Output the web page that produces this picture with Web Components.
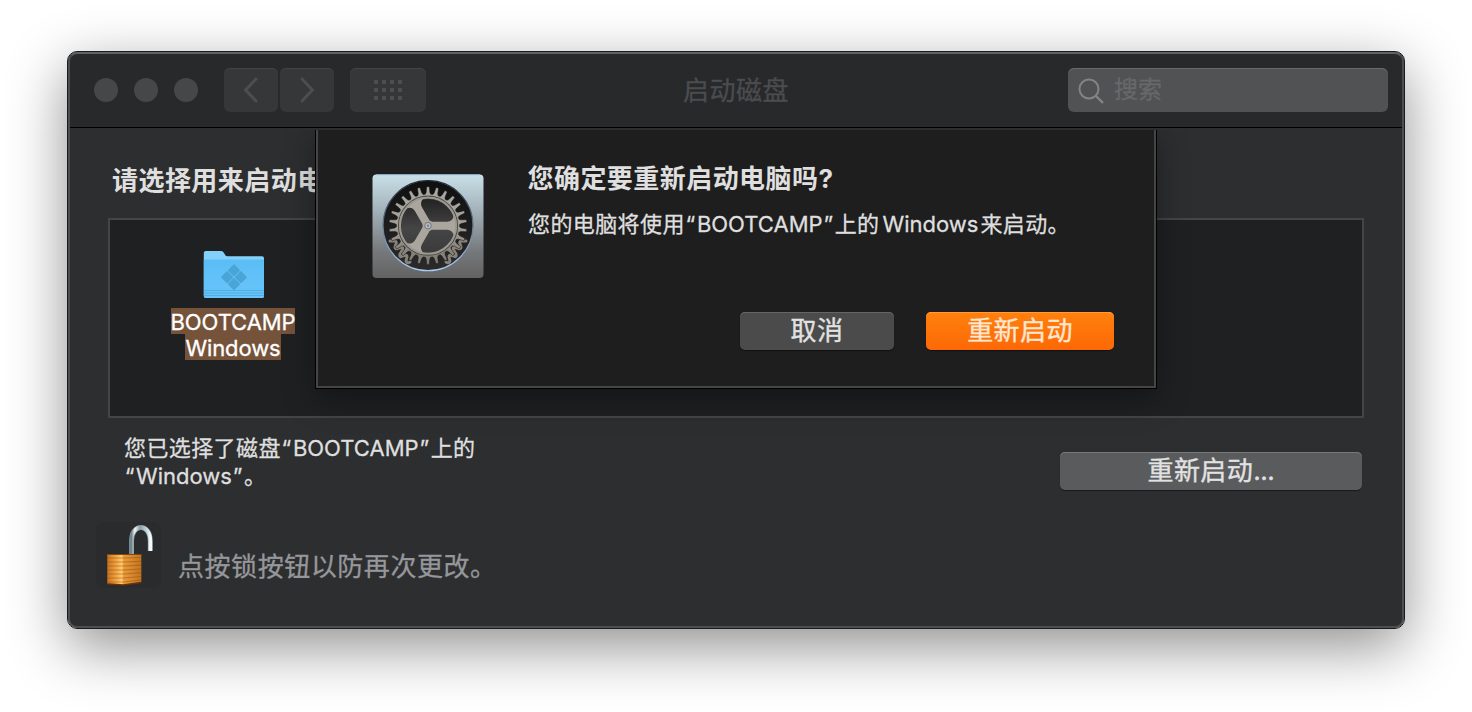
<!DOCTYPE html>
<html lang="zh-CN">
<head>
<meta charset="utf-8">
<title>启动磁盘</title>
<style>
html,body{margin:0;height:100%}
body{background:#fff;overflow:hidden;box-sizing:border-box;padding:51px 67px 0;font-family:Inter,"Noto Sans CJK SC",sans-serif;color:#dfdfdf}
</style>
</head>
<body>
<startup-window></startup-window>
<script>
const define = (name, html) => customElements.define(name, class extends HTMLElement {
  constructor() {
    super();
    this.attachShadow({mode: 'open'}).innerHTML = html;
    if (this.shadowRoot.querySelector('.teeth')) drawGear(this.shadowRoot);
  }
});

function drawGear(root) {
  const n = 26, cx = 56, cy = 51.7;
  let d = '';
  for (let i = 0; i < n; i++) {
    const a = i * 2 * Math.PI / n - Math.PI / 2;
    [[31.6, -.085], [33.4, -.055], [39, -.034], [39, .034], [33.4, .055], [31.6, .085]].forEach(([r, o]) => {
      d += (d ? 'L' : 'M') + (cx + r * Math.cos(a + o)).toFixed(2) + ' ' + (cy + r * Math.sin(a + o)).toFixed(2);
    });
  }
  root.querySelector('.teeth').setAttribute('d', d + 'Z');
}

define('mac-button', `<style>
:host{box-sizing:border-box;display:flex;align-items:center;justify-content:center;height:38px;border-radius:5px;background:var(--face,#4b4b4b);box-shadow:inset 0 1px 0 var(--edge,#656565),0 1px 1px rgba(0,0,0,.45);color:var(--ink,#e2e2e2);font-size:26px;line-height:38px;letter-spacing:.4px;white-space:nowrap;-webkit-text-stroke:.35px}
</style><span><slot></slot></span>`);

define('tool-button', `<style>
:host{box-sizing:border-box;display:flex;align-items:center;justify-content:center;width:54px;height:44px;border-radius:6px;background:#363739;box-shadow:inset 0 1px 0 #434446}
</style><slot></slot>`);

define('search-field', `<style>
:host{box-sizing:border-box;display:flex;align-items:center;width:320px;height:44px;border-radius:6px;background:#515254;box-shadow:inset 0 1px 0 #68696a;padding-left:10px;color:#67686a;font-size:24px;line-height:44px;-webkit-text-stroke:.3px}
svg{margin-right:9px}
</style><svg width="27" height="28" viewBox="0 0 27 28" fill="none" stroke="#838485" stroke-width="2"><circle cx="11" cy="13" r="9.5"/><path d="M18 20l7 7" stroke-width="2.4"/></svg><span><slot></slot></span>`);

define('tool-bar', `<style>
:host{display:flex;box-sizing:border-box;height:76px;padding:16px 16px 0 26px;background:#28292b;border-bottom:1px solid #000;align-items:flex-start}
.lights{display:flex;gap:16px;padding-top:10px;margin-right:26px}
i{display:block;width:24px;height:24px;border-radius:50%;background:#464749}
.nav{display:flex;gap:2px;margin-right:16px}
tool-button.grid{width:76px}
h1{margin:0;flex:1;font-size:26px;font-weight:400;line-height:46px;color:#4b4c4e;letter-spacing:.5px;padding-left:257px;-webkit-text-stroke:.3px}
</style>
<div class="lights"><i></i><i></i><i></i></div>
<div class="nav">
<tool-button><svg width="16" height="26" viewBox="0 0 16 26" fill="none" stroke="#4d4e50" stroke-width="3" stroke-linecap="round" stroke-linejoin="miter"><path d="M13 2L2.600 13L13 24"/></svg></tool-button>
<tool-button><svg width="16" height="26" viewBox="0 0 16 26" fill="none" stroke="#4d4e50" stroke-width="3" stroke-linecap="round"><path d="M3 2L13.400 13L3 24"/></svg></tool-button>
</div>
<tool-button class="grid"><svg width="28" height="20" viewBox="0 0 28 20" fill="none" stroke="#4d4e50" stroke-width="4" stroke-dasharray="4 4"><path d="M0 2H28M0 10H28M0 18H28"/></svg></tool-button>
<h1>启动磁盘</h1>
<search-field>搜索</search-field>`);

define('disk-item', `<style>
:host{display:flex;flex-direction:column;align-items:center;width:130px;color:#fff;font-size:22px;line-height:28px;letter-spacing:-.1px;-webkit-text-stroke:.3px}
svg{display:block;margin:0 0 9px 1px}
span{background:#75533a;height:26px;display:block}
</style>
<svg width="62" height="49" viewBox="0 0 62 49">
<defs><linearGradient id="f" x2="0" y2="1"><stop stop-color="#5bbdf5"/><stop offset="1" stop-color="#69c5fb"/></linearGradient></defs>
<path d="M.8 46V3q0-2 2-2H18q2 0 3 2l1.500 2.500q.8.700 2 .7H59q2 0 2 2V46q0 2-2 2H3q-2.200 0-2.200-2z" fill="#83d1fb"/>
<path d="M.8 9.500H61V46q0 2-2 2H3q-2.200 0-2.200-2z" fill="url(#f)"/>
<path d="M1 40.500H61M1 43H61M1 45.500H61" stroke="#50aee2" stroke-width="1"/>
<g fill="#48a5d6" transform="translate(31 27.200) rotate(45)"><rect x="-9.300" y="-9.300" width="8.900" height="8.900" rx="1"/><rect x=".4" y="-9.300" width="8.900" height="8.900" rx="1"/><rect x="-9.300" y=".4" width="8.900" height="8.900" rx="1"/><rect x=".4" y=".4" width="8.900" height="8.900" rx="1"/></g>
</svg>
<span><slot name="disk"></slot></span><span><slot name="system"></slot></span>`);

define('settings-icon', `<style>:host{display:block;width:112px;height:105px}svg{display:block}</style>
<svg width="112" height="105" viewBox="0 0 112 105">
<defs>
<linearGradient id="p" x2="0" y2="1"><stop stop-color="#c9e0e9"/><stop offset=".35" stop-color="#a3b1b8"/><stop offset=".75" stop-color="#75787b"/><stop offset="1" stop-color="#636261"/></linearGradient>
<linearGradient id="m" x2="0" y2="1"><stop stop-color="#a9aaa6"/><stop offset=".5" stop-color="#a39e96"/><stop offset="1" stop-color="#7b766e"/></linearGradient>
<linearGradient id="w" x2="0" y2="1"><stop stop-color="#0f0f0f"/><stop offset="1" stop-color="#2b2b2b"/></linearGradient>
<linearGradient id="r" x2="0" y2="1"><stop stop-color="#202833"/><stop offset="1" stop-color="#a9cbf4"/></linearGradient>
<linearGradient id="h" x2="0" y2="1"><stop stop-color="#222"/><stop offset=".55" stop-color="#454545"/><stop offset="1" stop-color="#3b3b3b"/></linearGradient>
</defs>
<rect x=".5" y=".5" width="111" height="103.500" rx="4" fill="url(#p)"/>
<path d="M4 1H108" stroke="#a9cfe6"/>
<circle cx="56" cy="51.700" r="45" fill="url(#w)" stroke="url(#r)" stroke-width="1.200"/>
<g fill="none" stroke="#86817a" stroke-width="3" stroke-linecap="round" stroke-linejoin="round">
<path d="M18 67l4 0q3 0 2 3l-1 3q0 3 4 1t4 1l-3 5q-1 4 3 2t4 1l-1 4q1 3 4 1"/>
<path d="M94 67l-4 0q-3 0-2 3l1 3q0 3-4 1t-4 1l3 5q1 4-3 2t-4 1l1 4q-1 3-4 1"/></g>
<path class="teeth" fill="url(#m)" stroke="#151515" stroke-width=".5"/>
<circle cx="56" cy="51.700" r="29.500" fill="none" stroke="#504e4b" stroke-width="1.200"/>
<circle cx="56" cy="51.700" r="27" fill="url(#h)" stroke="#3b3a38" stroke-width="1"/>
<g fill="#aaa69e">
<path d="M56 47.700L75 47.700Q81 47.500 82 41L84 45V58.400L82 62.400Q81 56 75 55.700L56 55.700Z"/>
<path d="M56 47.700L75 47.700Q81 47.500 82 41L84 45V58.400L82 62.400Q81 56 75 55.700L56 55.700Z" transform="rotate(120 56 51.700)"/>
<path d="M56 47.700L75 47.700Q81 47.500 82 41L84 45V58.400L82 62.400Q81 56 75 55.700L56 55.700Z" transform="rotate(240 56 51.700)"/></g>
<circle cx="56" cy="51.700" r="28" fill="none" stroke="#9c9992" stroke-width="1.800"/>
<circle cx="56" cy="51.700" r="5.500" fill="#aaa69e"/>
<circle cx="56" cy="51.700" r="3.300" fill="#b9bdc1" stroke="#6f757b" stroke-width="1"/><circle cx="56" cy="51.700" r="1.200" fill="#7c8288"/>
</svg>`);

define('lock-button', `<style>:host{display:block;width:65px;height:66px;border-radius:8px;background:#2a2b2c}svg{display:block}</style>
<svg width="65" height="66" viewBox="-.8 0 65 66">
<defs><linearGradient id="a"><stop stop-color="#c97320"/><stop offset=".25" stop-color="#f0a23e"/><stop offset=".43" stop-color="#ffce73"/><stop offset=".48" stop-color="#ea9b38"/><stop offset="1" stop-color="#c27420"/></linearGradient>
<linearGradient id="b"><stop stop-color="#71858c"/><stop offset=".18" stop-color="#f1f7f8"/><stop offset=".45" stop-color="#879ca4"/><stop offset=".8" stop-color="#c6d6dc"/><stop offset="1" stop-color="#f4fafc"/></linearGradient></defs>
<path d="M34.700 33V19C34.700 1 53.500 1 53.500 19V29" fill="none" stroke="#7d8d94" stroke-width="5"/>
<path d="M34.700 33V19C34.700 1 53.500 1 53.500 19V29" fill="none" stroke="url(#b)" stroke-width="3.800"/>
<path d="M10.500 32H44.500V60.500L26.500 63L10.500 62Z" fill="url(#a)"/>
<path d="M10.500 36H26.500L44.500 35.500M10.500 40H26.500L44.500 39.300M10.500 44H26.500L44.500 43.100M10.500 48H26.500L44.500 47M10.500 52H26.500L44.500 50.700M10.500 56H26.500L44.500 54.500M10.500 60H26.500L44.500 58.200" fill="none" stroke="#9a4e12" stroke-opacity=".5" stroke-width="1.200"/>
<path d="M10.500 62L26.500 63L44.500 60.500" fill="none" stroke="#673009" stroke-width="1.500"/><path d="M10.500 32.500H44.500" stroke="#85450f"/>
</svg>`);

define('confirm-sheet', `<style>
:host{box-sizing:border-box;display:grid;grid-template-columns:156px 1fr;width:840px;height:258px;background:#1e1e1e;border:2px solid #454545;border-top:0;box-shadow:0 0 0 1px #000,0 10px 30px rgba(0,0,0,.38);clip-path:inset(0 -60px -60px -60px);padding:44px 40px 0 54px}
h2{margin:0;font-size:26px;font-weight:700;line-height:36px;letter-spacing:.45px;margin-top:-13px;margin-left:-.5px;white-space:nowrap}
p{margin:12px 0 0;font-size:22px;line-height:30px;letter-spacing:.4px;white-space:nowrap;-webkit-text-stroke:.3px}
.acts{display:flex;justify-content:flex-end;gap:32px;margin-top:73px}
.acts :first-child{width:154px}.acts :last-child{width:188px;--face:linear-gradient(#ff810d,#fd6806);--edge:#ff9b3c;--ink:#ffe7d2}
</style>
<settings-icon></settings-icon>
<div><h2><slot name="title"></slot></h2><p><slot name="message"></slot></p>
<div class="acts"><mac-button>取消</mac-button><mac-button>重新启动</mac-button></div></div>`);

define('startup-window', `<style>
:host{display:block;box-sizing:border-box;position:relative;width:1338px;height:578px;border:1px solid #1a1b1c;border-radius:10px;box-shadow:0 18px 58px rgba(0,0,0,.44)}
.frame{position:relative;box-sizing:border-box;height:576px;border-radius:9px;overflow:hidden;background:#2d2e30}
.frame::after{content:"";position:absolute;inset:0;border-radius:9px;border:2px solid #4d4e4f;border-top-color:#616263;pointer-events:none}
main{padding:34px 40px 0 40px}
h2{margin:0 0 0 4px;font-size:26px;line-height:38px;font-weight:700;letter-spacing:.45px;white-space:nowrap}
.well{box-sizing:border-box;height:200px;margin-top:18px;border:2px solid #444547;background:#1f2022;padding:30px 0 0 58px}
.row{display:flex;justify-content:space-between;padding:16px 2px 0 16px}
.row p{margin:0;font-size:22px;line-height:28px;letter-spacing:.4px;-webkit-text-stroke:.3px}
.row mac-button{width:302px;margin-top:18px;--face:#5a5b5d;--edge:#777879}
footer{display:flex;margin:32px 0 0 -12px}
footer p{margin:28px 0 0 17px;font-size:26px;line-height:34px;letter-spacing:.55px;color:#96979a;-webkit-text-stroke:.3px}
confirm-sheet{position:absolute;left:248px;top:78px;z-index:2}
.gap{padding:0 2px 0 3px}
.en{letter-spacing:0}
.q{letter-spacing:1.600px;margin-left:.8px}
.dots{letter-spacing:-.4px}
</style>
<div class="frame">
<tool-bar></tool-bar>
<main>
<h2>请选择用来启动电</h2>
<div class="well"><disk-item><span slot="disk">BOOTCAMP</span><span slot="system">Windows</span></disk-item></div>
<div class="row"><p>您已选择了磁盘<span class="q">“</span><span class="en">BOOTCAMP</span><span class="q">”</span>上的<br><span class="q">“</span><span class="en">Windows</span><span class="q">”</span>。</p><mac-button>重新启动<span class="dots">...</span></mac-button></div>
<footer><lock-button></lock-button><p>点按锁按钮以防再次更改。</p></footer>
</main>
<confirm-sheet><span slot="title">您确定要重新启动电脑吗?</span><span slot="message">您的电脑将使用<span class="q">“</span><span class="en">BOOTCAMP</span><span class="q">”</span>上的<span class="gap en">Windows</span>来启动。</span></confirm-sheet>
</div>`);
</script>
</body>
</html>
